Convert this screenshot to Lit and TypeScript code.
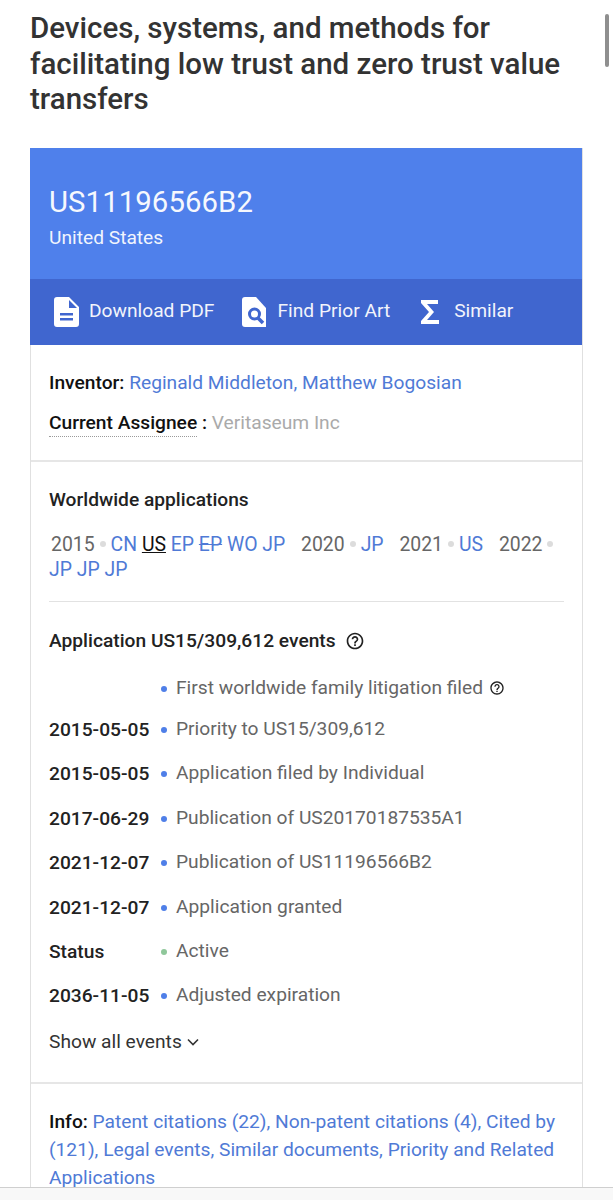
import { LitElement, html, css } from 'lit';
import { customElement } from 'lit/decorators.js';

const EVENTS = [
  { date: '', dot: '#4f7fe8', text: 'First worldwide family litigation filed', help: true },
  { date: '2015-05-05', dot: '#4f7fe8', text: 'Priority to US15/309,612' },
  { date: '2015-05-05', dot: '#4f7fe8', text: 'Application filed by Individual' },
  { date: '2017-06-29', dot: '#4f7fe8', text: 'Publication of US20170187535A1' },
  { date: '2021-12-07', dot: '#4f7fe8', text: 'Publication of US11196566B2' },
  { date: '2021-12-07', dot: '#4f7fe8', text: 'Application granted' },
  { date: 'Status', dot: '#8fc79a', text: 'Active' },
  { date: '2036-11-05', dot: '#4f7fe8', text: 'Adjusted expiration' },
];

const helpIcon = (size: number) => html`
  <svg width=${size} height=${size} viewBox="0 0 24 24" fill="#212121">
    <path d="M11 18h2v-2h-2v2zm1-16C6.48 2 2 6.48 2 12s4.48 10 10 10 10-4.48 10-10S17.52 2 12 2zm0 18c-4.41 0-8-3.59-8-8s3.59-8 8-8 8 3.59 8 8-3.59 8-8 8zm0-14c-2.21 0-4 1.79-4 4h2c0-1.1.9-2 2-2s2 .9 2 2c0 2-3 1.75-3 5h2c0-2.25 3-2.5 3-5 0-2.21-1.79-4-4-4z"/>
  </svg>
`;

@customElement('app-root')
export class AppRoot extends LitElement {
  static styles = css`
    :host {
      display: block;
      position: relative;
      width: 613px;
      height: 1200px;
      overflow: hidden;
      background: #fff;
      font-family: Roboto, 'Liberation Sans', sans-serif;
      color: #212121;
    }

    h1 {
      margin: 0;
      padding: 11px 30px 0;
      font-size: 29.5px;
      font-weight: 500;
      line-height: 35.5px;
      color: #333;
    }

    .card {
      margin: 30px 30px 0;
      border: 1px solid #e0e0e0;
      border-top: none;
      border-bottom: none;
    }

    .head {
      background: #4f80eb;
      height: 131px;
      box-sizing: border-box;
      padding: 36px 19px 0;
      margin: 0 0 0 -1px;
      color: #fff;
    }

    .pub {
      font-size: 29.3px;
      line-height: 36px;
      letter-spacing: 0.1px;
      opacity: 0.95;
    }

    .country {
      font-size: 19.2px;
      line-height: 21px;
      margin-top: 7px;
      opacity: 0.92;
    }

    .actions {
      background: #4066cf;
      height: 66px;
      display: flex;
      align-items: center;
      margin: 0 0 0 -1px;
      padding-left: 24px;
      color: #f2f4fb;
      font-size: 19.2px;
    }

    .action {
      display: flex;
      align-items: center;
    }

    .action svg {
      display: block;
      flex: none;
    }

    .action span {
      padding-bottom: 3px;
    }

    .action.pdf {
      gap: 10px;
      margin-right: 28px;
    }

    .action.art {
      gap: 11px;
      margin-right: 31px;
    }

    .action.sim {
      gap: 15px;
    }

    .section {
      padding: 0 18px;
      border-bottom: 2px solid #e6e6e6;
    }

    .people {
      height: 117px;
      box-sizing: border-box;
      padding-top: 26px;
      font-size: 19.2px;
      line-height: 24px;
    }

    b {
      font-weight: 500;
      color: #111;
    }

    a {
      color: #4f7ad6;
      text-decoration: none;
    }

    .assignee {
      margin-top: 16px;
    }

    .dotted {
      border-bottom: 1px dotted #9a9a9a;
      padding-bottom: 2px;
    }

    .muted {
      color: #aaa;
    }

    .ww {
      padding-top: 26px;
      border: none;
    }

    .ww-title {
      font-size: 19.2px;
      line-height: 24px;
      font-weight: 500;
      color: #222;
    }

    .timeline {
      margin-top: 20px;
      font-size: 19.4px;
      line-height: 25px;
      padding-bottom: 19px;
      border-bottom: 1px solid #e2e2e2;
    }

    .year {
      color: #666;
    }

    .year.first {
      margin-left: 2px;
    }

    .year:not(.first) {
      margin-left: 11px;
    }

    .sep {
      display: inline-block;
      width: 6px;
      height: 6px;
      border-radius: 50%;
      background: #dcdcdc;
      margin: 0 5px 3px 5px;
      vertical-align: middle;
    }

    a.cur {
      color: #111;
      text-decoration: underline;
    }

    .gone {
      text-decoration: line-through;
    }

    .events-title {
      display: flex;
      align-items: center;
      gap: 9px;
      margin-top: 27px;
      font-size: 19.2px;
      line-height: 24px;
      font-weight: 500;
      color: #222;
    }

    .events-title svg {
      display: block;
    }

    .events {
      margin-top: 23px;
    }

    .row {
      display: flex;
      height: 44.4px;
      font-size: 19.2px;
      line-height: 24px;
    }

    .row:first-child {
      height: 41.6px;
    }

    .date {
      width: 112px;
      flex: none;
      padding-top: 1px;
      font-weight: 500;
      color: #222;
    }

    .row-dot {
      width: 6px;
      height: 6px;
      flex: none;
      margin: 10px 9px 0 0;
      border-radius: 50%;
    }

    .row-text {
      display: flex;
      align-items: flex-start;
      gap: 6px;
      color: #666;
    }

    .row-text svg {
      margin-top: 4px;
    }

    .more {
      display: flex;
      align-items: center;
      gap: 4px;
      margin-top: 2px;
      padding-bottom: 28px;
      font-size: 19.2px;
      line-height: 24px;
      color: #333;
    }

    .info-section {
      margin: 0;
      border-top: 2px solid #e6e6e6;
      padding: 24px 18px 0;
      font-size: 19.2px;
      line-height: 28px;
      color: #4f7ad6;
    }

    .scrollbar {
      position: absolute;
      right: 4px;
      top: 14px;
      width: 4px;
      height: 53px;
      border-radius: 2px;
      background: #8f8f8f;
    }

    .browser-bar {
      position: absolute;
      left: 0;
      right: 0;
      bottom: 0;
      height: 13px;
      background: #f8f8f8;
      border-top: 1px solid #cfcfcf;
      box-sizing: border-box;
    }
  `;

  render() {
    return html`
      <h1>Devices, systems, and methods for facilitating low trust and zero trust value transfers</h1>
      <div class="card">
        <div class="head">
          <div class="pub">US11196566B2</div>
          <div class="country">United States</div>
        </div>
        <div class="actions">
          <div class="action pdf">
            <svg width="25" height="30" viewBox="0 0 25 30" fill="#fff">
              <path fill-rule="evenodd" d="M3 0h12l10 10v17a3 3 0 0 1-3 3H3a3 3 0 0 1-3-3V3a3 3 0 0 1 3-3zm12 3v8h8zM6 16v2.5h13V16zm0 5v2.5h13V21z"/>
            </svg>
            <span>Download PDF</span>
          </div>
          <div class="action art">
            <svg width="24" height="30" viewBox="0 0 24 30">
              <path fill="#fff" d="M3 0h11l10 11v19H3a3 3 0 0 1-3-3V3a3 3 0 0 1 3-3z"/>
              <circle cx="12.5" cy="17" r="5" fill="none" stroke="#4066cf" stroke-width="3"/>
              <path stroke="#4066cf" stroke-width="3.5" d="M16 21l8 8"/>
              <path fill="#fff" d="M24 30h-5l-1-1 5-5 1 1z"/>
            </svg>
            <span>Find Prior Art</span>
          </div>
          <div class="action sim">
            <svg width="18" height="24" viewBox="0 0 18 24" fill="#fff">
              <path d="M0 0h17v4H6l7 8-7 8h12v4H0v-3l8-9-8-9z"/>
            </svg>
            <span>Similar</span>
          </div>
        </div>
        <div class="section people">
          <div><b>Inventor:</b> <a>Reginald Middleton, Matthew Bogosian</a></div>
          <div class="assignee"><b class="dotted">Current Assignee</b> <b>:</b> <span class="muted">Veritaseum Inc</span></div>
        </div>
        <div class="section ww">
          <div class="ww-title">Worldwide applications</div>
          <div class="timeline">
            <span class="year first">2015</span><span class="sep"></span><a>CN</a> <a class="cur">US</a> <a>EP</a> <a class="gone">EP</a> <a>WO</a> <a>JP</a>
            <span class="year">2020</span><span class="sep"></span><a>JP</a>
            <span class="year">2021</span><span class="sep"></span><a>US</a>
            <span class="year">2022</span><span class="sep"></span>
            <a>JP</a> <a>JP</a> <a>JP</a>
          </div>
          <div class="events-title">Application US15/309,612 events ${helpIcon(20)}</div>
          <div class="events">
            ${EVENTS.map(
              (e) => html`
                <div class="row">
                  <div class="date">${e.date}</div>
                  <div class="row-dot" style="background:${e.dot}"></div>
                  <div class="row-text">${e.text} ${e.help ? helpIcon(16) : ''}</div>
                </div>
              `
            )}
          </div>
          <div class="more">
            Show all events
            <svg width="14" height="14" viewBox="0 0 14 14" fill="none" stroke="#333" stroke-width="1.6">
              <path d="M2 4.5l5 5 5-5"/>
            </svg>
          </div>
        </div>
        <div class="info-section">
          <b>Info:</b> <a>Patent citations (22)</a>, <a>Non-patent citations (4)</a>, <a>Cited by (121)</a>, <a>Legal events</a>, <a>Similar documents</a>, <a>Priority and Related Applications</a>
        </div>
      </div>
      <div class="scrollbar"></div>
      <div class="browser-bar"></div>
    `;
  }
}
